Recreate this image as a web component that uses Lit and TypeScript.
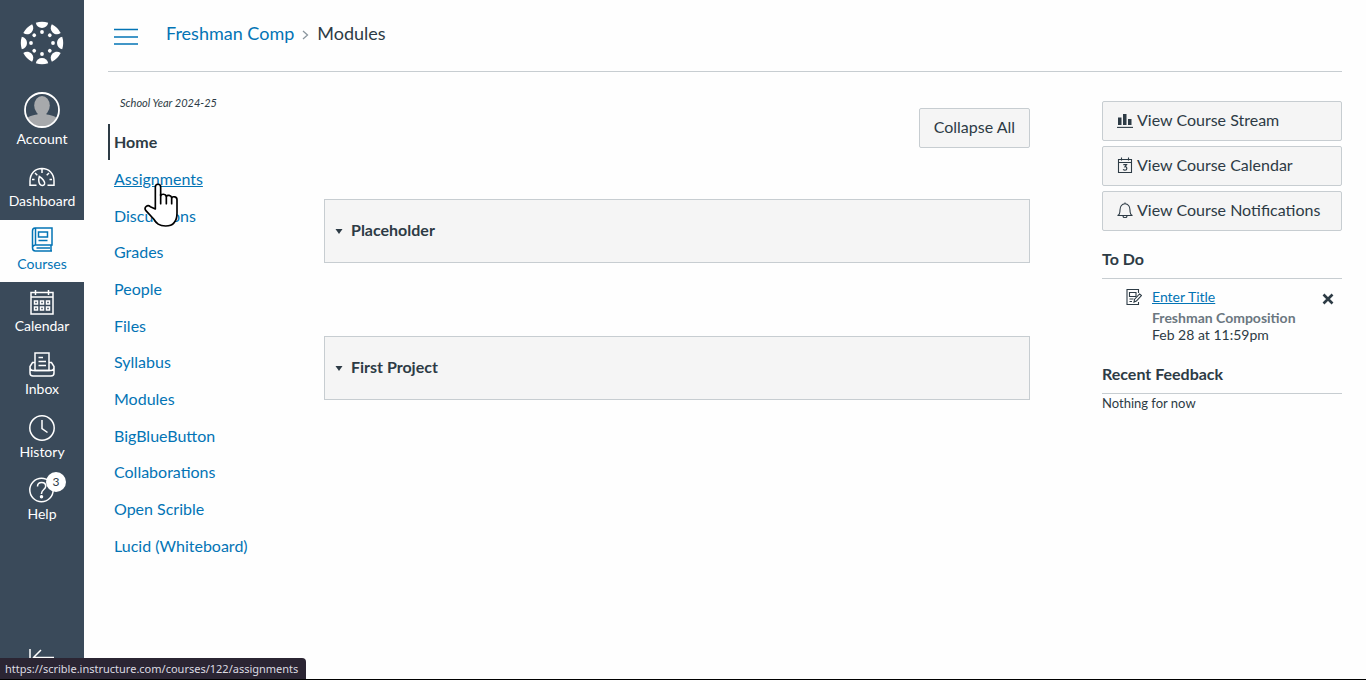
import { LitElement, html, svg, css } from "lit";
import { customElement } from "lit/decorators.js";
import { classMap } from "lit/directives/class-map.js";

const logo = svg`<svg class="logo" viewBox="0 0 44 44" width="44" height="44" fill="currentColor" aria-hidden="true">
  ${[0, 45, 90, 135, 180, 225, 270, 315].map(
    (a) => svg`<g transform="rotate(${a} 22 22)"><path d="M15.800 1.800Q22 -.2 28.200 1.800C27.600 5 25.200 7 22 7S16.400 5 15.800 1.800Z"/><circle cx="22" cy="11" r="1.900"/></g>`
  )}</svg>`;

const avatar = html`<svg class="avatar" viewBox="0 0 36 36" width="36" height="36" aria-hidden="true">
  <defs><clipPath id="face"><circle cx="18" cy="18" r="16.5"/></clipPath></defs>
  <g clip-path="url(#face)" fill="#a7a9ac"><ellipse cx="18" cy="13.5" rx="7.8" ry="9.5"/>
  <path d="M13.500 18h9v4.500c6 .6 10 2 12 6.500v7H1.500v-7c2-4.500 6-5.900 12-6.500z"/></g>
  <circle cx="18" cy="18" r="17" fill="none" stroke="#fff" stroke-width="1.8"/></svg>`;

const gauge = svg`<path d="M7.500 21.200H1V17C1 9.500 6 4.500 13 4.500S25 9.500 25 17v4.200h-6.500M13 5v4M6 9l2.300 2.200M20 9l-2.300 2.200M3 15.500h2.500M20.500 15.500H23"/><path d="M10.300 12.500c-.8 3-.6 6 .6 7.800 1.200 1.700 4 1.500 4.700-.3.700-2-2-5.500-5.300-7.500z"/>`;
const book = svg`<path d="M6 1h17v17H6a3 3 0 0 0-2.500 2.800V4C3.500 2 4.500 1 6 1zM3.500 20.800c0 2 1 3.200 2.800 3.200H23M22 18v6M7.500 21H21M6.500 1v17"/><path d="M9.500 5h9v5h-9zM9.500 13.500h9"/>`;
const calendar = svg`<path d="M2 3.500h22v21.500H2zM2 8h22M6.500 1v5M19.500 1v5"/><path d="M5.500 12h3v3h-3zM11.500 12h3v3h-3zM17.500 12h3v3h-3zM5.500 18h3v3h-3zM11.500 18h3v3h-3zM17.500 18h3v3h-3z"/>`;
const inbox = svg`<path d="M6 18.500V1h14v17.500zM9.500 5.500h4.500M9.500 9.500h7.500M9.500 13.500h7.500"/><path d="M6 10.500H3.500L1 14.500V21c0 2 1 3 3 3h18c2 0 3-1 3-3v-6.500l-2.500-4H20M1 15c0 2.500 1 3.500 3 3.500h18c2 0 3-1 3-3.500"/>`;
const clock = svg`<circle cx="13" cy="13" r="12.200"/><path d="M13 5v8.500l5.500 4"/>`;
const help = svg`<circle cx="12.500" cy="13" r="11.700"/><path d="M8.500 9.500C8.500 7 10.200 5.500 12.700 5.500s4 1.500 4 3.700c0 3.300-4.200 3.300-4.200 7.300v.5"/><circle cx="12.500" cy="19.800" r="1" fill="currentColor"/>`;

const navItems = [
  { label: "Dashboard", icon: gauge },
  { label: "Courses", icon: book, active: true },
  { label: "Calendar", icon: calendar },
  { label: "Inbox", icon: inbox },
  { label: "History", icon: clock },
  { label: "Help", icon: help, badge: 3 },
];

const sections = [
  "Home", "Assignments", "Discussions", "Grades", "People", "Files", "Syllabus",
  "Modules", "BigBlueButton", "Collaborations", "Open Scrible", "Lucid (Whiteboard)",
];

const streamIcon = svg`<path d="M1 5.500h3.500V13H1zM6 2h3.500v11H6zM11 7h3.500v6H11z" fill="currentColor" stroke="none"/><path d="M0 15.400h16"/>`;
const dayIcon = svg`<path d="M1.500 2.500h13v13h-13zM1.500 5.500h13M4.500 .5v3M11.500 .5v3"/><path d="M6.300 7.700h3.200L8 9.700c2.400-.2 2.400 3.500 0 3.500-.9 0-1.400-.3-1.900-.8" stroke-width="1.200"/>`;
const bellIcon = svg`<path d="M.5 13.500c2-.5 2.500-2 2.500-5.500C3 4.300 5 1.800 8 1.800s5 2.500 5 6.200c0 3.500 .5 5 2.500 5.500zM6 13.700c0 2.700 4 2.700 4 0M8 .4v1.400"/>`;

@customElement("global-nav")
export class GlobalNav extends LitElement {
  static styles = css`
    :host { display: flex; flex-direction: column; align-items: stretch; width: 84px; background: #3a4a5a; color: #fff; overflow: hidden; }
    a { color: inherit; text-decoration: none; }
    .home { display: flex; justify-content: center; padding: 21px 0; }
    .account { display: flex; flex-direction: column; align-items: center; margin-top: 6px; padding-bottom: 8px; }
    .label { font-size: 14px; line-height: 20px; }
    .account .label { margin-top: 1px; }
    .items { display: grid; grid-auto-rows: 1fr; height: 376px; margin: 0; padding: 0; list-style: none; }
    .item { position: relative; display: flex; flex-direction: column; align-items: center; gap: 1px; height: 100%; padding-top: 7px; box-sizing: border-box; }
    .active { background: #fefefe; color: #0374b5; }
    .icon { fill: none; stroke: currentColor; stroke-width: 1.5; }
    .badge { position: absolute; top: 2px; left: 46px; width: 20px; height: 20px; border-radius: 50%; background: #fff; color: #2d3b45; font-size: 12px; line-height: 19px; text-align: center; }
    .minimize { display: flex; justify-content: center; margin: auto 0 0; padding: 0 0 9px; border: 0; background: none; color: #fff; }
  `;
  render() {
    return html`
      <a class="home" href="#" aria-label="Home">${logo}</a>
      <a class="account" href="#">${avatar}<span class="label">Account</span></a>
      <ul class="items">
        ${navItems.map((n) => html`<li><a href="#" class=${classMap({ item: true, active: !!n.active })}>
          <svg class="icon" viewBox="0 0 26 26" width="26" height="26" aria-hidden="true">${n.icon}</svg>
          <span class="label">${n.label}</span>
          ${n.badge ? html`<span class="badge">${n.badge}</span>` : null}</a></li>`)}
      </ul>
      <button class="minimize" aria-label="Minimize navigation">
        <svg class="icon" viewBox="0 0 26 22" width="26" height="22"><path d="M1 1v20M25 9.500H5M12 2L4.500 9.500 12 17"/></svg>
      </button>`;
  }
}

@customElement("module-panel")
export class ModulePanel extends LitElement {
  static properties = { heading: {} };
  declare heading: string;
  static styles = css`
    :host { display: block; }
    .panel { display: flex; align-items: center; gap: 8px; width: 100%; height: 64px; padding: 0 0 2px 10px; border: 1px solid #c7cdd1; background: #f5f5f5; color: #2d3b45; font: bold 16px/20px Lato, sans-serif; box-sizing: border-box; }
    .arrow { fill: currentColor; }
  `;
  render() {
    return html`<button class="panel" aria-expanded="true">
      <svg class="arrow" viewBox="0 0 8 8" width="8" height="8"><path d="M.5 3h7L4 8z"/></svg>
      <span>${this.heading}</span></button>`;
  }
}

@customElement("course-sidebar")
export class CourseSidebar extends LitElement {
  static styles = css`
    :host { display: block; color: #2d3b45; }
    .actions { display: grid; gap: 5px; }
    .action { display: flex; align-items: center; gap: 4px; height: 40px; padding: 0 14px 2px; border: 1px solid #c7cdd1; border-radius: 2px; background: #f5f5f5; color: #2d3b45; font-size: 16px; text-decoration: none; box-sizing: border-box; }
    .icon { fill: none; stroke: currentColor; stroke-width: 1.1; flex: none; }
    .heading { margin: 0; padding-bottom: 8px; border-bottom: 1px solid #c7cdd1; font-size: 16px; line-height: 22px; }
    .todo-heading { margin-top: 17px; }
    .todo { display: flex; align-items: flex-start; padding: 9px 6px 0 24px; margin-bottom: 20px; }
    .details { flex: 1; margin-left: 10px; font-size: 14px; line-height: 17px; }
    .link { display: block; margin-bottom: 3px; line-height: 18px; color: #0374b5; }
    .course { color: #6b7780; font-weight: bold; }
    .close { display: flex; margin-top: 3px; padding: 2px; border: 0; background: none; color: #2d3b45; }
    .cross { fill: none; stroke: currentColor; stroke-width: 2.6; }
    .empty { margin: 0; font-size: 13px; line-height: 18px; }
  `;
  render() {
    const actions: [string, unknown][] = [
      ["View Course Stream", streamIcon],
      ["View Course Calendar", dayIcon],
      ["View Course Notifications", bellIcon],
    ];
    return html`
      <div class="actions">${actions.map(([text, icon]) => html`<a class="action" href="#">
        <svg class="icon" viewBox="0 0 16 16" width="16" height="16" aria-hidden="true">${icon}</svg>${text}</a>`)}</div>
      <h2 class="heading todo-heading">To Do</h2>
      <div class="todo">
        <svg class="icon" viewBox="0 0 16 18" width="16" height="18" aria-hidden="true"><path d="M12.500 5V1.500H1v15h11.500V14M3.500 4.500H10v4H3.500zM3.500 11h4M3.500 13.500h2.500"/><path d="M8 14l.6-2.800 5-5.300 1.800 1.600-5 5.500z" fill="#fefefe"/></svg>
        <div class="details">
          <a class="link" href="#">Enter Title</a>
          <div class="course">Freshman Composition</div>
          <div>Feb 28 at 11:59pm</div>
        </div>
        <button class="close" aria-label="Dismiss"><svg class="cross" viewBox="0 0 12 12" width="12" height="12"><path d="M1.500 1.500l9 9M10.500 1.500l-9 9"/></svg></button>
      </div>
      <h2 class="heading">Recent Feedback</h2>
      <p class="empty">Nothing for now</p>`;
  }
}

@customElement("app-root")
export class AppRoot extends LitElement {
  static styles = css`
    :host { display: flex; position: relative; height: 100vh; overflow: hidden; box-sizing: border-box; border-bottom: 1px solid #000; background: #fefefe; color: #2d3b45; font-family: Lato, sans-serif; font-size: 16px; line-height: 20px; }
    .page { flex: 1; min-width: 0; padding: 0 24px; }
    .top { display: flex; align-items: center; height: 71px; padding-left: 6px; border-bottom: 1px solid #c7cdd1; }
    .menu { display: flex; padding: 0; border: 0; background: none; color: #0374b5; }
    .lines { fill: none; stroke: currentColor; stroke-width: 1.6; }
    .crumbs { display: flex; align-items: center; gap: 8px; margin-left: 28px; padding-bottom: 6px; font-size: 18px; line-height: 24px; }
    .crumb { color: #0374b5; text-decoration: none; }
    .chevron { fill: none; stroke: #8b969e; stroke-width: 1.3; margin-top: 4px; }
    .body { display: flex; align-items: flex-start; }
    .sections { width: 192px; margin-right: 24px; padding-top: 22px; }
    .term { margin: 0 0 12px 12px; font-size: 11px; line-height: 18px; font-style: italic; }
    .list { display: grid; grid-auto-rows: 1fr; height: 440px; margin: 0; padding: 0; list-style: none; }
    .entry { display: flex; align-items: center; }
    .section { padding: 8px 4px; border-left: 2px solid transparent; color: #0374b5; text-decoration: none; }
    .current { border-color: #2d3b45; color: #2d3b45; font-weight: bold; }
    .hovered { text-decoration: underline; }
    .content { flex: 1; min-width: 0; padding-top: 36px; }
    .toolbar { display: flex; justify-content: flex-end; margin-bottom: 51px; }
    .collapse { height: 40px; padding: 0 14px 2px; border: 1px solid #c7cdd1; border-radius: 2px; background: #f5f5f5; color: #2d3b45; font: 16px/20px Lato, sans-serif; }
    .modules { display: grid; gap: 73px; }
    .aside { width: 240px; margin-left: 72px; padding-top: 29px; }
    .status { position: absolute; left: 0; bottom: 0; height: 21px; padding: 0 8px 0 5px; border-radius: 0 4px 0 0; background: #2b2533; color: #dcdbe2; font: 11px/21px "Noto Sans", sans-serif; }
    .pointer { position: absolute; left: 144px; top: 183px; fill: #fff; stroke: #000; stroke-width: 5; stroke-linejoin: round; stroke-linecap: round; }
  `;
  render() {
    return html`
      <global-nav></global-nav>
      <div class="page">
        <header class="top">
          <button class="menu" aria-label="Toggle course menu"><svg class="lines" viewBox="0 0 24 18" width="24" height="18"><path d="M0 2.500h24M0 10h24M0 17h24"/></svg></button>
          <nav class="crumbs"><a class="crumb" href="#">Freshman Comp</a>
            <svg class="chevron" viewBox="0 0 7 10" width="7" height="10"><path d="M1 1l4.500 4L1 9"/></svg><span>Modules</span></nav>
        </header>
        <div class="body">
          <nav class="sections">
            <p class="term">School Year 2024-25</p>
            <ul class="list">${sections.map((s) => html`<li class="entry"><a href="#" class=${classMap({ section: true, current: s === "Home", hovered: s === "Assignments" })}>${s}</a></li>`)}</ul>
          </nav>
          <main class="content">
            <div class="toolbar"><button class="collapse">Collapse All</button></div>
            <div class="modules">
              <module-panel heading="Placeholder"></module-panel>
              <module-panel heading="First Project"></module-panel>
            </div>
          </main>
          <course-sidebar class="aside"></course-sidebar>
        </div>
      </div>
      <div class="status">https://scrible.instructure.com/courses/122/assignments</div>
      <svg class="pointer" viewBox="0 0 105 135" width="35" height="45" aria-hidden="true">
        <path d="M34 78V12c0-11 16-11 16 0v26c2-6 15-6 17 2 3-5 14-4 16 4 4-5 16-3 16 6v40c0 26-12 39-34 39-20 0-28-8-36-21L5 82c-6-10 6-18 14-11z"/>
        <path d="M50 34v28M67 40v22M83 44v18" fill="none"/>
      </svg>`;
  }
}
